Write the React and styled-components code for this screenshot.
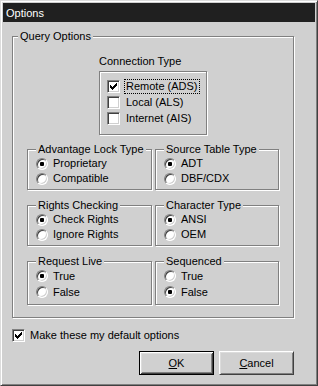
import React from "react";
import styled, { createGlobalStyle } from "styled-components";

const bg = "#d0d0d0";

const GlobalStyle = createGlobalStyle`
  html, body {
    margin: 0;
    padding: 0;
    background: ${bg};
  }
  body {
    font-family: "Liberation Sans", Arial, sans-serif;
    font-size: 11px;
    color: #000;
  }
`;

const Window = styled.div`
  box-sizing: border-box;
  width: 318px;
  height: 386px;
  padding: 2px;
  background: ${bg};
  border: 1px solid;
  border-color: #dcdcdc #404040 #404040 #dcdcdc;
  box-shadow: inset 1px 1px #fff, inset -1px -1px #808080;
  display: flex;
  flex-direction: column;
`;

const TitleBar = styled.div`
  height: 19px;
  background: #202020;
  color: #fff;
  display: flex;
  align-items: center;
  padding-left: 3px;
`;

const Body = styled.div`
  padding-left: 9px;
  display: flex;
  flex-direction: column;
`;

const Group = styled.div`
  position: relative;
  box-sizing: border-box;
  width: ${(p) => (p.$w ? `${p.$w}px` : "auto")};
  height: ${(p) => p.$h}px;
  margin: ${(p) => p.$m || "0"};
  padding: ${(p) => p.$pad || "0"};
  border: 1px solid #808080;
  box-shadow: inset 1px 1px #fff, 1px 1px #fff;
  display: flex;
  flex-direction: column;
`;

const Caption = styled.span`
  position: absolute;
  top: -7px;
  left: ${(p) => p.$left}px;
  padding: 0 2px;
  line-height: 13px;
  background: ${bg};
  white-space: nowrap;
`;

const StaticLabel = styled.div`
  line-height: 13px;
  margin-left: 72px;
`;

const Grid = styled.div`
  display: grid;
  grid-template-columns: 125px 124px;
  grid-template-rows: 41px 41px 44px;
  column-gap: 3px;
  row-gap: 15px;
  margin-top: 14px;
`;

const Row = styled.div`
  display: flex;
  align-items: center;
  height: ${(p) => p.$h}px;
  gap: ${(p) => p.$gap}px;
`;

const DefaultRow = styled.div`
  margin-top: 9px;
`;

const Label = styled.span`
  padding: 0 1px;
  line-height: 13px;
  border: 1px dotted ${(p) => (p.$focus ? "#000" : "transparent")};
  white-space: nowrap;
`;

const Box = styled.span`
  flex: none;
  box-sizing: border-box;
  width: 13px;
  height: 13px;
  background: #fff;
  border: 1px solid;
  border-color: #808080 #fff #fff #808080;
  box-shadow: inset 1px 1px #404040, inset -1px -1px ${bg};
  display: flex;
  align-items: center;
  justify-content: center;
`;

const Radio = styled.span`
  flex: none;
  box-sizing: border-box;
  width: 12px;
  height: 12px;
  border-radius: 50%;
  background: #fff;
  border: 1px solid;
  border-color: #808080 #fff #fff #808080;
  box-shadow: inset 1px 1px #404040, inset -1px -1px ${bg};
  display: flex;
  align-items: center;
  justify-content: center;
  &::after {
    content: "";
    width: 4px;
    height: 4px;
    border-radius: 1px;
    background: ${(p) => (p.$on ? "#000" : "transparent")};
  }
`;

const Buttons = styled.div`
  width: 282px;
  margin-top: 8px;
  display: flex;
  justify-content: flex-end;
  gap: 5px;
`;

const Button = styled.button`
  box-sizing: border-box;
  width: 75px;
  height: 24px;
  padding: 0;
  font: inherit;
  color: #000;
  background: ${bg};
  border: 1px solid;
  border-color: ${(p) => (p.$default ? "#000" : "#fff #404040 #404040 #fff")};
  box-shadow: ${(p) =>
    p.$default
      ? "inset 1px 1px #fff, inset -1px -1px #404040, inset 2px 2px #dcdcdc, inset -2px -2px #808080"
      : "inset 1px 1px #dcdcdc, inset -1px -1px #808080"};
  u {
    text-decoration: underline;
  }
`;

const Check = () => (
  <svg width="7" height="7" viewBox="0 0 7 7" shapeRendering="crispEdges">
    <rect x="6" y="0" width="1" height="1" />
    <rect x="5" y="1" width="2" height="1" />
    <rect x="0" y="2" width="1" height="1" />
    <rect x="4" y="2" width="3" height="1" />
    <rect x="0" y="3" width="2" height="1" />
    <rect x="3" y="3" width="3" height="1" />
    <rect x="0" y="4" width="5" height="1" />
    <rect x="1" y="5" width="3" height="1" />
    <rect x="2" y="6" width="1" height="1" />
  </svg>
);

const CheckItem = ({ checked, focus, gap = 4, h = 16, children }) => (
  <Row $h={h} $gap={gap}>
    <Box>{checked && <Check />}</Box>
    <Label $focus={focus}>{children}</Label>
  </Row>
);

const RadioGroup = ({ title, options, value, rowH = 15, h }) => (
  <Group $h={h} $pad="6px 0 0 8px">
    <Caption $left={8}>{title}</Caption>
    {options.map((o) => (
      <Row key={o} $h={rowH} $gap={3}>
        <Radio $on={o === value} />
        <Label>{o}</Label>
      </Row>
    ))}
  </Group>
);

export default function App() {
  return (
    <>
      <GlobalStyle />
      <Window>
        <TitleBar>Options</TitleBar>
        <Body>
          <Group $w={282} $h={282} $m="14px 0 0 0" $pad="18px 0 0 14px">
            <Caption $left={5}>Query Options</Caption>
            <StaticLabel>Connection Type</StaticLabel>
            <Group $w={108} $h={64} $m="3px 0 0 72px" $pad="6px 0 0 7px">
              <CheckItem checked focus>Remote (ADS)</CheckItem>
              <CheckItem>Local (ALS)</CheckItem>
              <CheckItem>Internet (AIS)</CheckItem>
            </Group>
            <Grid>
              <RadioGroup h={41} title="Advantage Lock Type" options={["Proprietary", "Compatible"]} value="Proprietary" />
              <RadioGroup h={41} title="Source Table Type" options={["ADT", "DBF/CDX"]} value="ADT" />
              <RadioGroup h={41} title="Rights Checking" options={["Check Rights", "Ignore Rights"]} value="Check Rights" />
              <RadioGroup h={41} title="Character Type" options={["ANSI", "OEM"]} value="ANSI" />
              <RadioGroup h={44} rowH={16} title="Request Live" options={["True", "False"]} value="True" />
              <RadioGroup h={44} rowH={16} title="Sequenced" options={["True", "False"]} value="False" />
            </Grid>
          </Group>
          <DefaultRow>
            <CheckItem checked gap={3}>Make these my default options</CheckItem>
          </DefaultRow>
          <Buttons>
            <Button $default>
              <u>O</u>K
            </Button>
            <Button>
              <u>C</u>ancel
            </Button>
          </Buttons>
        </Body>
      </Window>
    </>
  );
}
